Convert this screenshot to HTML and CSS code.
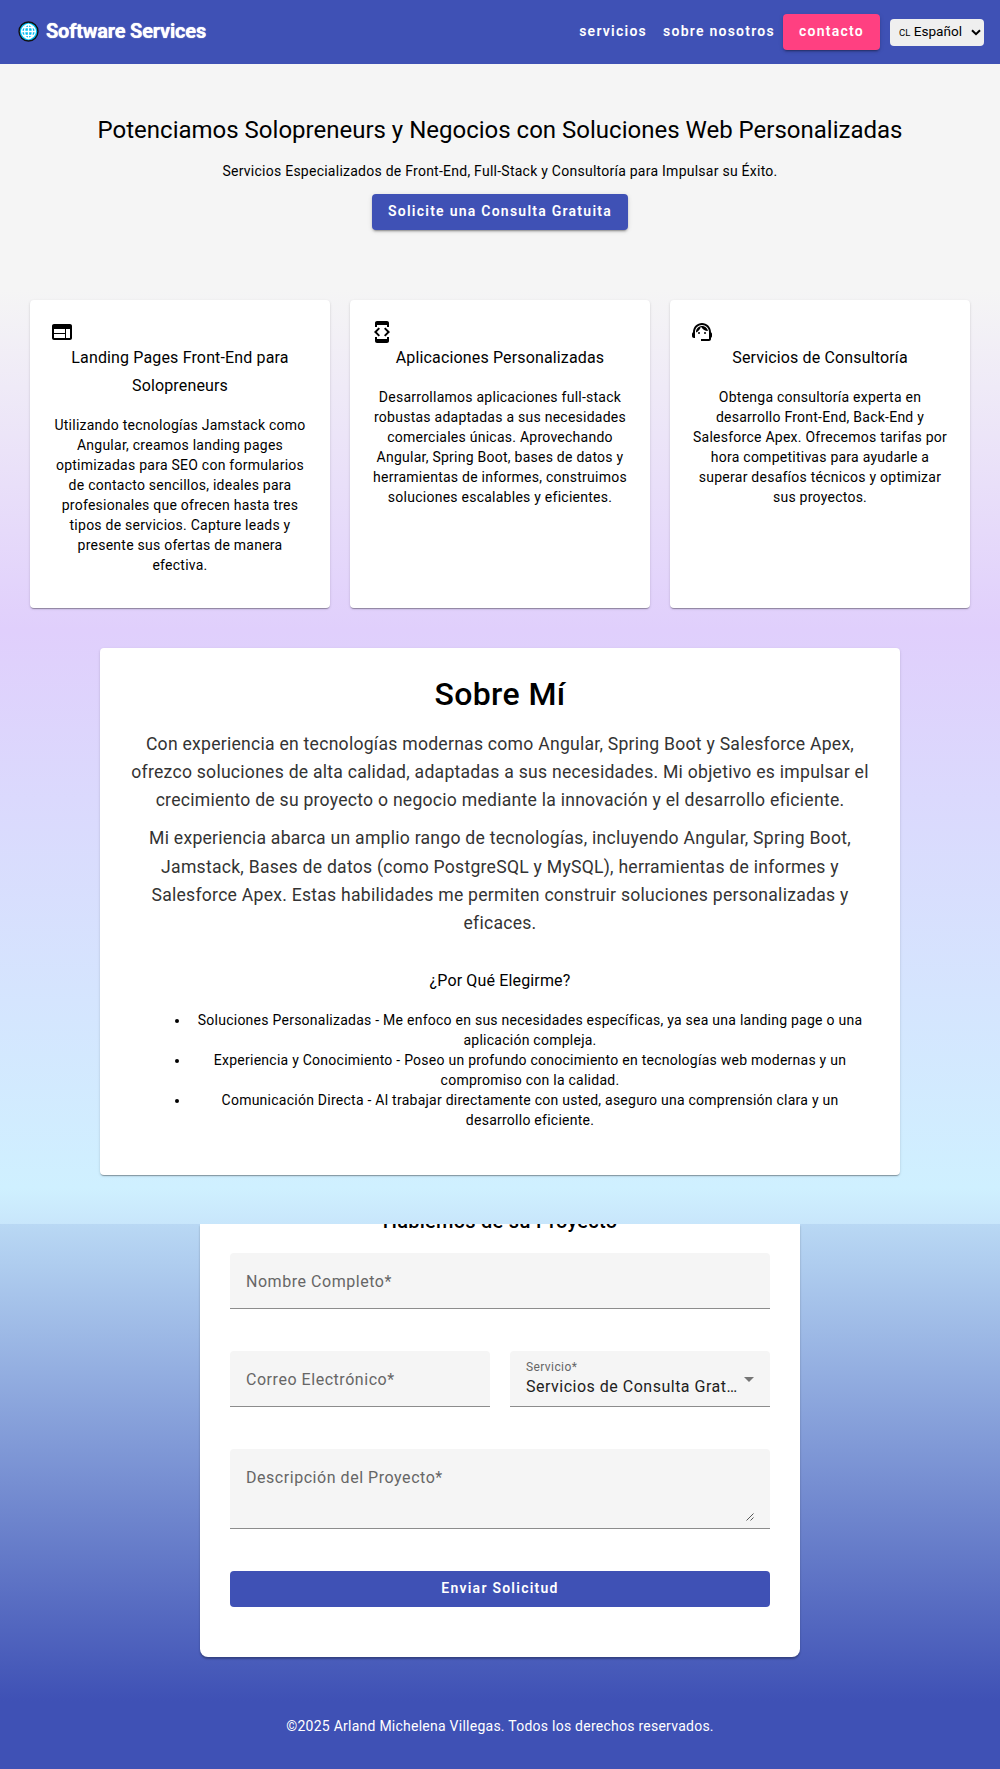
FILE: index.html
```html
<!DOCTYPE html>
<html lang="es">
<head>
<meta charset="utf-8">
<title>Software Services</title>
<link rel="stylesheet" href="styles.css">
</head>
<body>
<header class="toolbar">
  <div class="brand">
    <svg class="globe" viewBox="0 0 24 24"><circle cx="12" cy="12" r="10.8" fill="#00bcf2" stroke="#111" stroke-width="1.6"/><g fill="none" stroke="#fff" stroke-width="1.5"><ellipse cx="12" cy="12" rx="4.4" ry="8.400"/><circle cx="12" cy="12" r="7.8"/><path d="M12 4v16M4 12h16M5.500 7.5h13M5.500 16.5h13"/></g></svg>
    <span class="brand-name">Software Services</span>
  </div>
  <nav class="nav">
    <a class="nav-link">servicios</a>
    <a class="nav-link">sobre nosotros</a>
    <a class="nav-link nav-cta">contacto</a>
    <div class="lang"><span><small>CL</small> Español</span><svg viewBox="0 0 10 7"><path d="M1 1.2l4 4 4-4" fill="none" stroke="#000" stroke-width="2"/></svg></div>
  </nav>
</header>
<main>
  <section class="hero">
    <h1>Potenciamos Solopreneurs y Negocios con Soluciones Web Personalizadas</h1>
    <p>Servicios Especializados de Front-End, Full-Stack y Consultoría para Impulsar su Éxito.</p>
    <a class="btn">Solicite una Consulta Gratuita</a>
  </section>
  <section class="services">
    <article class="card">
      <svg class="icon" viewBox="0 0 24 24"><path d="M20 4H4c-1.1 0-1.99.9-1.99 2L2 18c0 1.1.9 2 2 2h16c1.1 0 2-.9 2-2V6c0-1.1-.9-2-2-2zm-5 14H4v-4h11v4zm0-5H4V9h11v4zm5 5h-4V9h4v9z"/></svg>
      <h3>Landing Pages Front-End para Solopreneurs</h3>
      <p>Utilizando tecnologías Jamstack como Angular, creamos landing pages optimizadas para SEO con formularios de contacto sencillos, ideales para profesionales que ofrecen hasta tres tipos de servicios. Capture leads y presente sus ofertas de manera efectiva.</p>
    </article>
    <article class="card">
      <svg class="icon" viewBox="0 0 24 24"><path d="M7 5h10v2h2V3c0-1.1-.9-1.99-2-1.99L7 1c-1.1 0-2 .9-2 2v4h2V5zm8.41 11.59L20 12l-4.59-4.59L14 8.83 17.17 12 14 15.17l1.41 1.42zM10 15.17L6.83 12 10 8.83 8.59 7.41 4 12l4.59 4.59L10 15.17zM17 19H7v-2H5v4c0 1.1.9 2 2 2h10c1.1 0 2-.9 2-2v-4h-2v2z"/></svg>
      <h3>Aplicaciones Personalizadas</h3>
      <p>Desarrollamos aplicaciones full-stack robustas adaptadas a sus necesidades comerciales únicas. Aprovechando Angular, Spring Boot, bases de datos y herramientas de informes, construimos soluciones escalables y eficientes.</p>
    </article>
    <article class="card">
      <svg class="icon" viewBox="0 0 24 24"><path d="M21 12.22C21 6.73 16.74 3 12 3c-4.69 0-9 3.65-9 9.28-.6.34-1 .98-1 1.72v2c0 1.1.9 2 2 2h1v-6.1c0-3.87 3.13-7 7-7s7 3.13 7 7V19h-8v2h8c1.1 0 2-.9 2-2v-1.22c.59-.31 1-.92 1-1.64v-2.3c0-.7-.41-1.31-1-1.62z"/><circle cx="9" cy="13" r="1"/><circle cx="15" cy="13" r="1"/><path d="M18 11.03C17.52 8.18 15.04 6 12.05 6c-3.03 0-6.29 2.51-6.03 6.45 2.47-1.01 4.33-3.21 4.86-5.89 1.31 2.63 4 4.44 7.12 4.47z"/></svg>
      <h3>Servicios de Consultoría</h3>
      <p>Obtenga consultoría experta en desarrollo Front-End, Back-End y Salesforce Apex. Ofrecemos tarifas por hora competitivas para ayudarle a superar desafíos técnicos y optimizar sus proyectos.</p>
    </article>
  </section>
  <section class="about">
    <div class="about-card">
      <h2>Sobre Mí</h2>
      <p class="lead">Con experiencia en tecnologías modernas como Angular, Spring Boot y Salesforce Apex, ofrezco soluciones de alta calidad, adaptadas a sus necesidades. Mi objetivo es impulsar el crecimiento de su proyecto o negocio mediante la innovación y el desarrollo eficiente.</p>
      <p class="lead">Mi experiencia abarca un amplio rango de tecnologías, incluyendo Angular, Spring Boot, Jamstack, Bases de datos (como PostgreSQL y MySQL), herramientas de informes y Salesforce Apex. Estas habilidades me permiten construir soluciones personalizadas y eficaces.</p>
      <h3>¿Por Qué Elegirme?</h3>
      <ul>
        <li>Soluciones Personalizadas - Me enfoco en sus necesidades específicas, ya sea una landing page o una aplicación compleja.</li>
        <li>Experiencia y Conocimiento - Poseo un profundo conocimiento en tecnologías web modernas y un compromiso con la calidad.</li>
        <li>Comunicación Directa - Al trabajar directamente con usted, aseguro una comprensión clara y un desarrollo eficiente.</li>
      </ul>
    </div>
  </section>
  <section class="contact">
    <form class="form-card">
      <h2>Hablemos de su Proyecto</h2>
      <div class="field">Nombre Completo*</div>
      <div class="row">
        <div class="field">Correo Electrónico*</div>
        <div class="field select">
          <div class="select-text"><small>Servicio*</small><span>Servicios de Consulta Gratuita</span></div>
          <svg viewBox="0 0 10 5"><path d="M0 0h10L5 5z" fill="#757575"/></svg>
        </div>
      </div>
      <div class="field area">Descripción del Proyecto*<svg viewBox="0 0 8 8"><path d="M.5 7.5l7-7M4.500 7.500l3-3" stroke="#444" stroke-width=".9"/></svg></div>
      <div class="submit">Enviar Solicitud</div>
    </form>
  </section>
</main>
<footer class="footer">©2025 Arland Michelena Villegas. Todos los derechos reservados.</footer>
</body>
</html>
```
FILE: styles.css
```css
* { box-sizing: border-box; }
body { margin: 0; width: 1000px; height: 1769px; overflow: hidden; font-family: Roboto, sans-serif; font-size: 14px; line-height: 20px; letter-spacing: .25px; color: #000; }
h1, h2, h3, p, ul { margin: 0; }
.toolbar { height: 64px; padding: 0 16px; background: #3f51b5; color: #fff; display: flex; align-items: center; justify-content: space-between; }
.brand { display: flex; align-items: center; gap: 7px; padding: 0 0 2px 2px; }
.globe { width: 21px; height: 21px; }
.brand-name { font-size: 20px; font-weight: 700; letter-spacing: -.2px; line-height: 32px; text-shadow: 0 0 1px #fff; }
.nav { display: flex; align-items: center; }
.nav-link { height: 36px; padding: 0 8px; line-height: 35px; font-weight: 600; letter-spacing: 1.25px; }
.nav-cta { padding: 0 16px; background: #ff4081; border-radius: 4px; box-shadow: 0 3px 1px -2px rgba(0,0,0,.2), 0 2px 2px rgba(0,0,0,.14), 0 1px 5px rgba(0,0,0,.12); }
.lang { width: 94px; height: 27px; margin-left: 10px; padding: 0 3px 0 9px; display: flex; align-items: center; justify-content: space-between; background: #efefef; border-radius: 4px; color: #000; font-size: 13.6px; letter-spacing: 0; }
.lang small { font-size: 9.5px; }
.lang svg { width: 10px; height: 7px; }
.hero { height: 226px; padding-top: 48px; background: #f5f5f5; text-align: center; }
.hero h1 { font-size: 24px; line-height: 36px; font-weight: 400; letter-spacing: 0; }
.hero p { margin: 13px 0; }
.btn { display: inline-block; height: 36px; padding: 0 16px; line-height: 35px; border-radius: 4px; background: #3f51b5; color: #fff; font-weight: 600; letter-spacing: 1.25px; box-shadow: 0 3px 1px -2px rgba(0,0,0,.2), 0 2px 2px rgba(0,0,0,.14), 0 1px 5px rgba(0,0,0,.12); }
.services { height: 339px; padding: 10px 30px 20px; display: grid; grid-template-columns: repeat(3, 300px); gap: 20px; background: linear-gradient(#f5f5f5, #e0cffc); }
.card, .about-card { background: #fff; border-radius: 4px; box-shadow: 0 2px 1px -1px rgba(0,0,0,.2), 0 1px 1px rgba(0,0,0,.14), 0 1px 3px rgba(0,0,0,.12); text-align: center; }
.card { height: 308px; padding: 20px; }
.icon { width: 24px; height: 24px; display: block; }
.card h3, .about-card h3 { font-size: 16px; line-height: 28px; font-weight: 400; letter-spacing: .15px; }
.card p { margin-top: 15px; }
.about { height: 595px; padding: 19px 100px 49px; background: linear-gradient(#e0cffc, #cff0ff 94%, #c8e6fb); }
.about-card { height: 527px; padding: 24px 30px; }
.about-card h2 { font-size: 32px; line-height: 44px; font-weight: 500; letter-spacing: .4px; margin-bottom: 14px; }
.lead { font-size: 17.6px; line-height: 28.16px; color: #333; margin-bottom: 10px; }
.about-card h3 { margin: 30px 0 15px; }
.about-card ul { padding: 0 0 0 60px; }
.contact { height: 477px; padding: 0 200px; overflow: hidden; background: linear-gradient(#b9d8f4, #3f51b5); }
.form-card { display: flow-root; height: 433px; padding: 0 30px; border-radius: 0 0 8px 8px; background: #fff; box-shadow: 0 2px 2px rgba(0,0,0,.3); }
.form-card h2 { margin-top: -17px; height: 46px; font-size: 20px; line-height: 28px; font-weight: 500; letter-spacing: .25px; text-align: center; }
.field { height: 56px; margin-bottom: 42px; padding: 0 16px; background: #f5f5f5; border-bottom: 1px solid #8c8c8c; border-radius: 4px 4px 0 0; font-size: 16px; line-height: 58px; letter-spacing: .54px; color: #666; }
.row { display: grid; grid-template-columns: 1fr 1fr; gap: 20px; }
.select { display: flex; align-items: center; gap: 6px; min-width: 0; }
.select-text { min-width: 0; flex: 1; display: flex; flex-direction: column; line-height: 24px; letter-spacing: .5px; }
.select-text small { font-size: 12px; line-height: 16px; letter-spacing: .4px; }
.select-text span { overflow: hidden; text-overflow: ellipsis; white-space: nowrap; color: #212121; }
.select svg { width: 10px; height: 5px; margin-top: 2px; }
.area { height: 80px; display: flex; justify-content: space-between; }
.area svg { width: 8px; height: 8px; align-self: flex-end; margin-bottom: 7px; }
.submit { height: 36px; border-radius: 4px; background: #3f51b5; color: #fff; text-align: center; line-height: 35px; font-weight: 600; letter-spacing: 1.25px; }
.footer { height: 68px; padding-top: 15px; background: #3f51b5; color: #fff; text-align: center; }
```
